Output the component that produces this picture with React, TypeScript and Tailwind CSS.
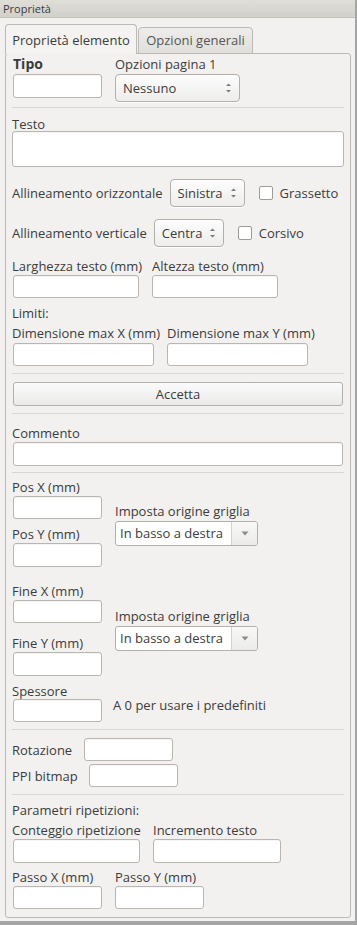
import React from "react";

const font = { fontFamily: '"Open Sans", "Noto Sans", sans-serif' };

function Label({ children, className = "" }: { children: React.ReactNode; className?: string }) {
  return <div className={`h-[16px] text-[13px] leading-[16px] text-[#3c3c3c] whitespace-nowrap ${className}`}>{children}</div>;
}

function Input({ w, h = 23, className = "" }: { w: string; h?: number; className?: string }) {
  return (
    <div
      className={`${w} ${h === 24 ? "h-[24px]" : h === 36 ? "h-[36px]" : "h-[23px]"} shrink-0 rounded-[3px] border border-[#b9b6b1] bg-white shadow-[inset_0_1px_1px_rgba(0,0,0,0.04)] ${className}`}
    />
  );
}

function SpinArrows() {
  return (
    <svg width="7" height="12" viewBox="0 0 7 12" className="shrink-0">
      <path d="M1 4 L3.5 1.5 L6 4 Z" fill="#7a7a7a" />
      <path d="M1 8 L3.5 10.5 L6 8 Z" fill="#7a7a7a" />
    </svg>
  );
}

function SpinCombo({ text, w }: { text: string; w: string }) {
  return (
    <div className={`${w} h-[28px] shrink-0 flex items-center justify-between pl-[7px] pr-[7px] rounded-[4px] border border-[#b3b0ab] bg-gradient-to-b from-[#fdfdfd] to-[#eeedec] shadow-[0_1px_0_rgba(255,255,255,0.8)]`}>
      <span className="text-[13px] text-[#3c3c3c] leading-none">{text}</span>
      <SpinArrows />
    </div>
  );
}

function DropCombo({ text }: { text: string }) {
  return (
    <div className="w-[143px] h-[25px] shrink-0 flex rounded-[3px] border border-[#b3b0ab] bg-white overflow-hidden">
      <div className="flex-1 flex items-center pl-[4px] text-[13px] text-[#3c3c3c] leading-none">{text}</div>
      <div className="w-[26px] flex items-center justify-center border-l border-[#d4d2ce] bg-gradient-to-b from-[#f8f8f7] to-[#ecebea]">
        <svg width="8" height="5" viewBox="0 0 8 5">
          <path d="M0.5 0.5 L7.5 0.5 L4 4.5 Z" fill="#8c8c8c" />
        </svg>
      </div>
    </div>
  );
}

function Check({ label, className = "" }: { label: string; className?: string }) {
  return (
    <div className={`flex items-center ${className}`}>
      <div className="w-[14px] h-[14px] rounded-[2px] border border-[#9f9c97] bg-white" />
      <span className="ml-[7px] text-[13px] text-[#3c3c3c] leading-none">{label}</span>
    </div>
  );
}

function Sep({ className = "" }: { className?: string }) {
  return <div className={`h-px -ml-px mr-[-2px] bg-[#d9d7d3] ${className}`} />;
}

export default function App() {
  return (
    <div className="w-[357px] h-[925px] bg-[#f2f1f0] border-r-2 border-b-4 border-[#a5a5a5] flex flex-col" style={font}>
      {/* title bar */}
      <div className="h-[18px] shrink-0 flex items-center pl-[3px] bg-gradient-to-b from-[#e0ded9] to-[#d2d0cb] border-b border-[#c4c1bc]">
        <span className="text-[11px] text-[#3c3c3c] leading-none">Proprietà</span>
      </div>

      {/* tabs */}
      <div className="mt-[6px] ml-[5px] flex items-end relative z-10 -mb-px">
        <div className="w-[132px] h-[30px] flex items-center justify-center rounded-t-[4px] border border-b-0 border-[#bdbab5] bg-[#f4f3f2]">
          <span className="text-[13px] text-[#3c3c3c] leading-none mt-[2px]">Proprietà elemento</span>
        </div>
        <div className="w-[115px] h-[27px] ml-px flex items-center justify-center rounded-t-[4px] border border-[#bdbab5] bg-gradient-to-b from-[#eeedeb] to-[#e0dfdc]">
          <span className="text-[13px] text-[#555] leading-none">Opzioni generali</span>
        </div>
      </div>

      {/* panel */}
      <div className="ml-[5px] w-[346px] h-[865px] rounded-[3px] border border-[#bdbab5] bg-[#f2f1f0] pl-[7px] pr-[8px] pt-[2px] flex flex-col">
        {/* tipo + opzioni pagina */}
        <div className="flex">
          <div className="w-[89px]">
            <div className="h-[16px] text-[14px] font-bold leading-[16px] text-[#3c3c3c]">Tipo</div>
            <Input w="w-[89px]" h={24} className="mt-[2px]" />
          </div>
          <div className="ml-[13px]">
            <Label>Opzioni pagina 1</Label>
            <div className="mt-[2px]">
              <SpinCombo text="Nessuno" w="w-[125px]" />
            </div>
          </div>
        </div>

        <Sep className="mt-[5px]" />

        <Label className="mt-[8px] -ml-px">Testo</Label>
        <Input w="w-[332px]" h={36} className="-ml-px -mt-px" />

        {/* allineamento orizzontale */}
        <div className="mt-[12px] flex items-center">
          <Label className="-ml-px">Allineamento orizzontale</Label>
          <div className="ml-[7px]">
            <SpinCombo text="Sinistra" w="w-[75px]" />
          </div>
          <Check label="Grassetto" className="ml-[14px]" />
        </div>

        {/* allineamento verticale */}
        <div className="mt-[12px] flex items-center">
          <Label className="-ml-px">Allineamento verticale</Label>
          <div className="ml-[7px]">
            <SpinCombo text="Centra" w="w-[70px]" />
          </div>
          <Check label="Corsivo" className="ml-[14px]" />
        </div>

        {/* larghezza / altezza */}
        <div className="mt-[11px] flex gap-[13px]">
          <div className="w-[126px]">
            <Label className="-ml-px">Larghezza testo (mm)</Label>
            <Input w="w-[126px]" className="mt-px" />
          </div>
          <div className="w-[126px]">
            <Label>Altezza testo (mm)</Label>
            <Input w="w-[126px]" className="mt-px" />
          </div>
        </div>

        <Label className="mt-[7px] -ml-px">Limiti:</Label>
        <div className="mt-[4px] flex gap-[13px]">
          <div className="w-[141px]">
            <Label className="-ml-px">Dimensione max X (mm)</Label>
            <Input w="w-[141px]" className="mt-[2px]" />
          </div>
          <div className="w-[141px]">
            <Label>Dimensione max Y (mm)</Label>
            <Input w="w-[141px]" className="mt-[2px]" />
          </div>
        </div>

        <Sep className="mt-[7px]" />

        <div className="mt-[8px] h-[24px] w-[330px] flex items-center justify-center rounded-[3px] border border-[#b3b0ab] bg-gradient-to-b from-[#fbfbfb] to-[#ebeae9]">
          <span className="text-[13px] text-[#3c3c3c] leading-none">Accetta</span>
        </div>

        <Sep className="mt-[7px]" />

        <Label className="mt-[11px] -ml-px">Commento</Label>
        <Input w="w-[330px]" h={24} className="mt-px" />

        <Sep className="mt-[6px]" />

        {/* pos */}
        <div className="mt-[6px] flex">
          <div className="w-[89px]">
            <Label className="-ml-px">Pos X (mm)</Label>
            <Input w="w-[89px]" className="mt-px" />
            <Label className="mt-[7px] -ml-px">Pos Y (mm)</Label>
            <Input w="w-[89px]" h={24} className="mt-px" />
          </div>
          <div className="ml-[13px] mt-[24px]">
            <Label>Imposta origine griglia</Label>
            <div className="mt-[2px]">
              <DropCombo text="In basso a destra" />
            </div>
          </div>
        </div>

        {/* fine */}
        <div className="mt-[16px] flex">
          <div className="w-[89px]">
            <Label className="-ml-px">Fine X (mm)</Label>
            <Input w="w-[89px]" className="mt-px" />
            <Label className="mt-[12px] -ml-px">Fine Y (mm)</Label>
            <Input w="w-[89px]" h={24} className="mt-px" />
          </div>
          <div className="ml-[13px] mt-[25px]">
            <Label>Imposta origine griglia</Label>
            <div className="mt-[2px]">
              <DropCombo text="In basso a destra" />
            </div>
          </div>
        </div>

        {/* spessore */}
        <Label className="mt-[7px] -ml-px">Spessore</Label>
        <div className="flex items-start">
          <Input w="w-[89px]" />
          <Label className="ml-[11px] -mt-[2px]">A 0 per usare i predefiniti</Label>
        </div>

        <Sep className="mt-[7px]" />

        <div className="mt-[8px] flex items-center">
          <Label className="-ml-px w-[72px]">Rotazione</Label>
          <Input w="w-[89px]" />
        </div>
        <div className="mt-[3px] flex items-center">
          <Label className="-ml-px w-[77px]">PPI bitmap</Label>
          <Input w="w-[89px]" />
        </div>

        <Sep className="mt-[7px]" />

        <Label className="mt-[7px] -ml-px">Parametri ripetizioni:</Label>
        <div className="mt-[4px] flex gap-[13px]">
          <div className="w-[127px]">
            <Label className="-ml-px">Conteggio ripetizione</Label>
            <Input w="w-[127px]" h={24} className="mt-px" />
          </div>
          <div className="w-[128px]">
            <Label>Incremento testo</Label>
            <Input w="w-[128px]" h={24} className="mt-px" />
          </div>
        </div>
        <div className="mt-[6px] flex gap-[13px]">
          <div className="w-[89px]">
            <Label className="-ml-px">Passo X (mm)</Label>
            <Input w="w-[89px]" className="mt-px" />
          </div>
          <div className="w-[89px]">
            <Label>Passo Y (mm)</Label>
            <Input w="w-[89px]" className="mt-px" />
          </div>
        </div>
      </div>
    </div>
  );
}
